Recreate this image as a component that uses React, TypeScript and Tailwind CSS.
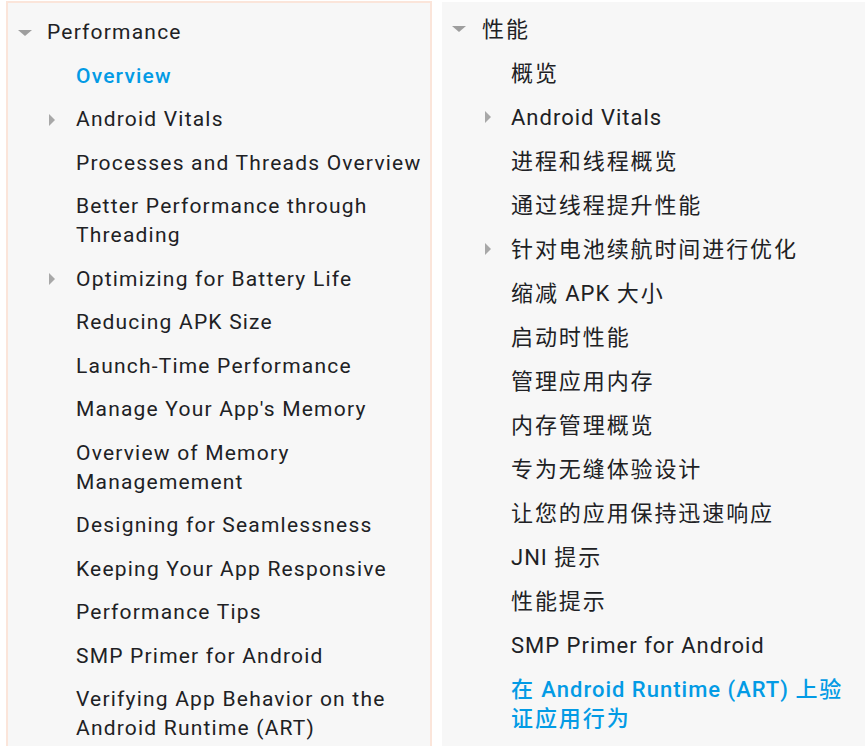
const leftItems: { label: string; caret?: boolean; active?: boolean }[] = [
  { label: 'Overview', active: true },
  { label: 'Android Vitals', caret: true },
  { label: 'Processes and Threads Overview' },
  { label: 'Better Performance through Threading' },
  { label: 'Optimizing for Battery Life', caret: true },
  { label: 'Reducing APK Size' },
  { label: 'Launch-Time Performance' },
  { label: "Manage Your App's Memory" },
  { label: 'Overview of Memory Managemement' },
  { label: 'Designing for Seamlessness' },
  { label: 'Keeping Your App Responsive' },
  { label: 'Performance Tips' },
  { label: 'SMP Primer for Android' },
  { label: 'Verifying App Behavior on the Android Runtime (ART)' },
];

const rightItems: { label: string; caret?: boolean; active?: boolean }[] = [
  { label: '概览' },
  { label: 'Android Vitals', caret: true },
  { label: '进程和线程概览' },
  { label: '通过线程提升性能' },
  { label: '针对电池续航时间进行优化', caret: true },
  { label: '缩减 APK 大小' },
  { label: '启动时性能' },
  { label: '管理应用内存' },
  { label: '内存管理概览' },
  { label: '专为无缝体验设计' },
  { label: '让您的应用保持迅速响应' },
  { label: 'JNI 提示' },
  { label: '性能提示' },
  { label: 'SMP Primer for Android' },
  { label: '在 Android Runtime (ART) 上验证应用行为', active: true },
];

// CJK glyphs sit a bit wider in the reference than the Latin runs,
// so each one gets its own span with extra tracking
function Mixed({ text }: { text: string }) {
  const parts = text.match(/[\u4e00-\u9fff]|[^\u4e00-\u9fff]+/g) || [];
  return (
    <>
      {parts.map((p, i) =>
        /[\u4e00-\u9fff]/.test(p) ? (
          <span key={i} className="tracking-[1.9px]">{p}</span>
        ) : (
          <span key={i}>{p}</span>
        )
      )}
    </>
  );
}

function CaretDown() {
  return <div className="w-0 h-0 border-l-[7px] border-r-[7px] border-t-[6px] border-l-transparent border-r-transparent border-t-[#9e9e9e]" />;
}

function CaretRight() {
  return <div className="w-0 h-0 border-t-[6px] border-b-[6px] border-l-[6px] border-t-transparent border-b-transparent border-l-[#a8a8a8]" />;
}

export default function App() {
  return (
    <div
      className="flex h-[746px] w-[865px] overflow-hidden bg-white text-[#202124]"
      style={{ fontFamily: 'Roboto, "Noto Sans CJK SC", sans-serif' }}
    >
      {/* English nav */}
      <div className="ml-[6px] mt-[1px] w-[426px] shrink-0 border-2 border-b-0 border-[#fbe5da] bg-[#f7f7f7] pt-[8px] text-[21px] leading-[29px] tracking-[1.2px]">
        <div className="flex items-center pl-[10px] py-[7.25px]">
          <div className="w-[29px]"><CaretDown /></div>
          <span>Performance</span>
        </div>
        {leftItems.map(item => (
          <div key={item.label} className="flex pl-[41px] pr-[2px] py-[7.25px]">
            <div className="w-[27px] shrink-0 h-[29px] flex items-center">{item.caret && <CaretRight />}</div>
            <span className={item.active ? 'text-[#039be5] font-medium' : ''}>{item.label}</span>
          </div>
        ))}
      </div>

      {/* Chinese nav */}
      <div className="ml-[10px] mt-[2px] flex-1 bg-[#f7f7f7] pt-[5px] text-[22px] leading-[29px] tracking-[1px]">
        <div className="flex items-center pl-[10px] py-[7.5px]">
          <div className="w-[30px]"><CaretDown /></div>
          <span><Mixed text="性能" /></span>
        </div>
        {rightItems.map(item => (
          <div key={item.label} className="flex pl-[43px] pr-[16px] py-[7.5px]">
            <div className="w-[26px] shrink-0 h-[29px] flex items-center">{item.caret && <CaretRight />}</div>
            <span className={item.active ? 'text-[#039be5] font-medium' : ''}><Mixed text={item.label} /></span>
          </div>
        ))}
      </div>
    </div>
  );
}
